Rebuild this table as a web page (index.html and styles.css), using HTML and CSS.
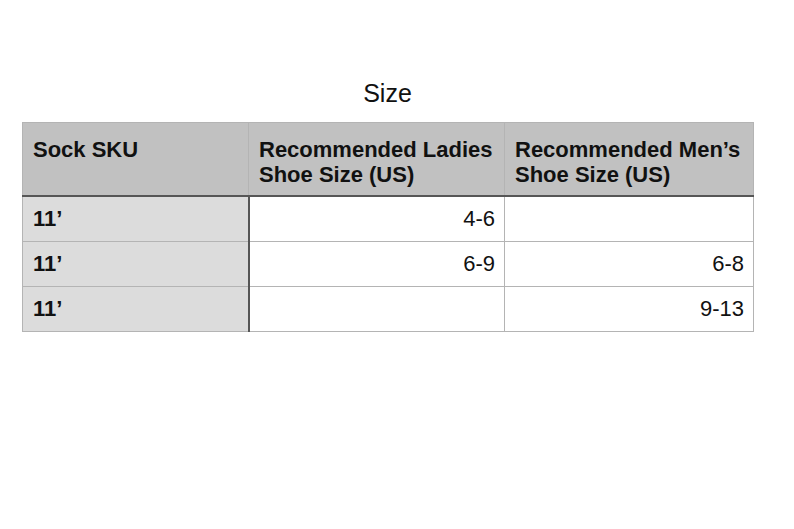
FILE: index.html
```html
<!DOCTYPE html>
<html>
<head>
<meta charset="utf-8">
<link rel="stylesheet" href="styles.css">
</head>
<body>
<div class="page">
  <h1 class="title">Size</h1>
  <table class="sizes">
    <colgroup>
      <col class="c1"><col class="c2"><col class="c3">
    </colgroup>
    <thead>
      <tr>
        <th class="sku">Sock SKU</th>
        <th>Recommended Ladies Shoe Size (US)</th>
        <th>Recommended Men’s Shoe Size (US)</th>
      </tr>
    </thead>
    <tbody>
      <tr><th class="sku">11’</th><td>4-6</td><td></td></tr>
      <tr><th class="sku">11’</th><td>6-9</td><td>6-8</td></tr>
      <tr><th class="sku">11’</th><td></td><td>9-13</td></tr>
    </tbody>
  </table>
</div>
</body>
</html>
```

FILE: styles.css
```css
html, body {
  margin: 0;
  padding: 0;
  background: #ffffff;
}
body {
  font-family: "Liberation Sans", Arial, Helvetica, sans-serif;
  color: #111111;
}
.page {
  width: 731px;
  margin-left: 22px;
  padding-top: 78px;
}
.title {
  margin: 0 0 14px 0;
  font-size: 25px;
  line-height: 30px;
  font-weight: normal;
  text-align: center;
}
.sizes {
  width: 731px;
  border-collapse: collapse;
  table-layout: fixed;
  font-size: 22px;
}
.c1 { width: 226px; }
.c2 { width: 256px; }
.c3 { width: 249px; }
.sizes th,
.sizes td {
  border: 1px solid #b4b4b4;
  padding: 0 9px 0 10px;
  vertical-align: middle;
}
.sizes thead th {
  background: #c1c1c1;
  font-weight: bold;
  text-align: left;
  line-height: 25px;
  height: 73px;
  vertical-align: top;
  padding-top: 14px;
  padding-bottom: 0;
  box-sizing: border-box;
  border-bottom: 2px solid #565656;
}
.sizes tbody th,
.sizes tbody td {
  height: 44px;
  line-height: 25px;
}
.sizes tbody th {
  background: #dcdcdc;
  font-weight: bold;
  text-align: left;
  border-right: 2px solid #565656;
}
.sizes tbody td {
  text-align: right;
  background: #ffffff;
}
```
